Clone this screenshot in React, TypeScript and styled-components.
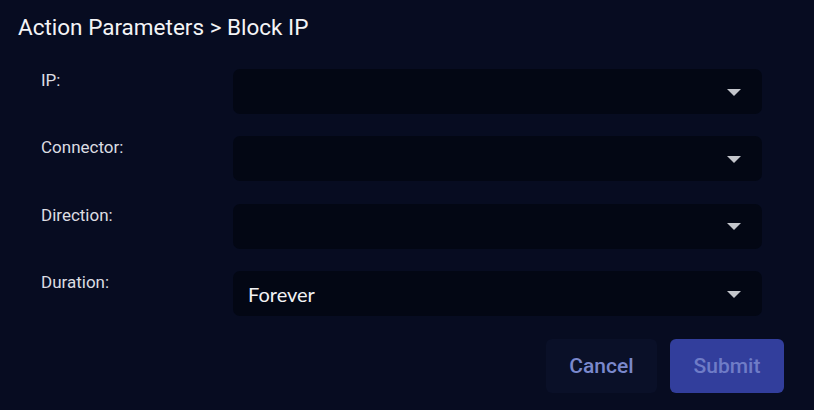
import React from 'react';
import styled, {createGlobalStyle} from 'styled-components';

const GlobalStyle = createGlobalStyle`
  html, body {
    margin: 0;
    padding: 0;
    background: #070c21;
  }
  body {
    font-family: Roboto, "Liberation Sans", sans-serif;
  }
`

const Panel = styled.div`
  width: 814px;
  height: 410px;
  box-sizing: border-box;
  background: #070c21;
  padding: 13px 30px 0 18px;
`
const Title = styled.h1`
  margin: 0;
  font-size: 22.5px;
  font-weight: 400;
  color: #f4f4f6;
  line-height: 28px;
`
const Form = styled.div`
  display: flex;
  flex-direction: column;
  gap: 22.4px;
  margin-top: 28px;
  padding-right: 22px;
`
const Row = styled.div`
  display: flex;
  align-items: flex-start;
`
const Label = styled.div`
  width: 215px;
  box-sizing: border-box;
  padding-left: 23px;
  padding-top: 1px;
  font-size: 17px;
  color: #dcdde2;
  line-height: 20px;
`
const Select = styled.div`
  flex: 1;
  height: 45px;
  border-radius: 7px;
  background: #030714;
  display: flex;
  align-items: center;
  justify-content: space-between;
  padding: 0 21px 0 15px;
  box-sizing: border-box;
`
const Value = styled.span`
  font-family: Lato, Roboto, sans-serif;
  font-size: 20px;
  color: #f2f2f4;
`
const Caret = styled.div`
  width: 0;
  height: 0;
  border-left: 7px solid transparent;
  border-right: 7px solid transparent;
  border-top: 7px solid #c4c6cc;
  margin-top: 1px;
`
const Actions = styled.div`
  display: flex;
  justify-content: flex-end;
  gap: 13px;
  margin-top: 23px;
`
const Button = styled.button<{primary?: boolean}>`
  height: 54px;
  width: ${p => (p.primary ? '114px' : '111px')};
  border: none;
  border-radius: 6px;
  background: ${p => (p.primary ? '#323e9c' : '#0a1028')};
  color: ${p => (p.primary ? '#6f7cc7' : '#7a88cc')};
  font-family: Roboto, sans-serif;
  font-size: 21px;
  font-weight: 500;
  cursor: pointer;
`

const fields = [
    {label: 'IP:', value: ''},
    {label: 'Connector:', value: ''},
    {label: 'Direction:', value: ''},
    {label: 'Duration:', value: 'Forever'},
]

export default function App() {
    return (
        <>
            <GlobalStyle />
            <Panel>
                <Title>Action Parameters &gt; Block IP</Title>
                <Form>
                    {fields.map(f => (
                        <Row key={f.label}>
                            <Label>{f.label}</Label>
                            <Select>
                                <Value>{f.value}</Value>
                                <Caret />
                            </Select>
                        </Row>
                    ))}
                </Form>
                <Actions>
                    <Button>Cancel</Button>
                    <Button primary>Submit</Button>
                </Actions>
            </Panel>
        </>
    )
}
